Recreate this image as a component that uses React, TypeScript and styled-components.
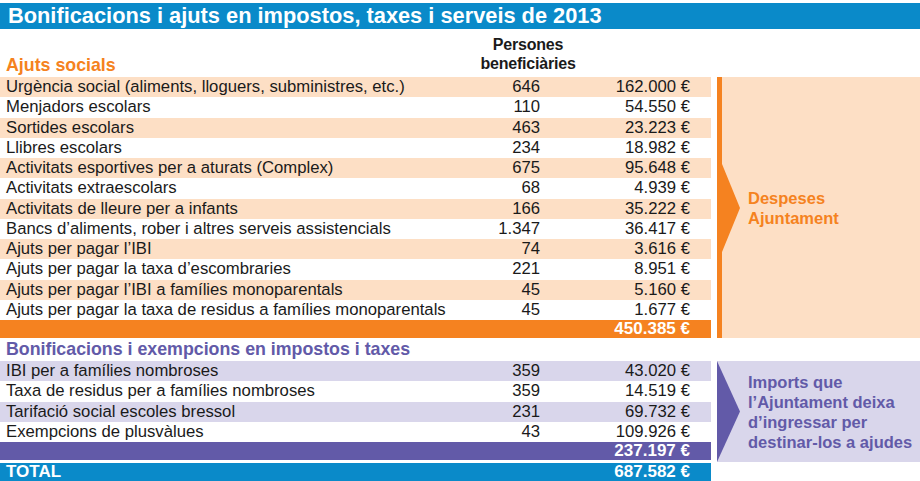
import React from "react";
import styled, { createGlobalStyle } from "styled-components";

const C = {
  blue: "#0a8ac9",
  orange: "#f58220",
  peach: "#fddfc5",
  purple: "#625aa8",
  lavender: "#d9d6eb",
  text: "#1a1a1a",
};

const Global = createGlobalStyle`
  html, body { margin: 0; padding: 0; background: #fff; }
  body { font-family: "Liberation Sans", Arial, Helvetica, sans-serif; color: ${C.text}; }
`;

const Page = styled.div`
  width: 920px;
  height: 481px;
  padding-top: 3px;
  box-sizing: border-box;
  overflow: hidden;
`;

const TitleBar = styled.div`
  height: 26px;
  background: ${C.blue};
  color: #fff;
  font-weight: 700;
  font-size: 21.8px;
  line-height: 26px;
  padding-left: 8px;
  white-space: nowrap;
`;

const HeadArea = styled.div`
  width: 711px;
  height: 48px;
  display: grid;
  grid-template-columns: 460px 136px;
  align-items: end;
`;

const HeadAreaSmall = styled.div`
  height: 23px;
  display: flex;
  align-items: end;
`;

const SectionTitle = styled.div<{ $color: string }>`
  color: ${(p) => p.$color};
  font-weight: 700;
  font-size: 17.8px;
  line-height: 20px;
  padding-left: 6px;
  padding-bottom: 2px;
  white-space: nowrap;
`;

const ColHead = styled.div`
  font-weight: 700;
  font-size: 16px;
  line-height: 19px;
  text-align: center;
  padding-bottom: 4px;
  letter-spacing: -0.2px;
`;

const Section = styled.div`
  display: flex;
  gap: 6px;
`;

const Table = styled.div<{ $after?: number }>`
  width: 711px;
  flex: none;
  margin-bottom: ${(p) => p.$after ?? 0}px;
`;

const Row = styled.div<{ $bg: string }>`
  display: grid;
  grid-template-columns: 454px 80px 150px;
  height: 20.25px;
  align-items: center;
  background: ${(p) => p.$bg};
  padding-left: 6px;
  padding-right: 21px;
  font-size: 16.7px;
  line-height: 20px;
  white-space: nowrap;
`;

const Num = styled.span`
  text-align: right;
`;

const TotalRow = styled.div<{ $bg: string }>`
  display: flex;
  justify-content: space-between;
  height: 18px;
  background: ${(p) => p.$bg};
  color: #fff;
  font-weight: 700;
  font-size: 17px;
  line-height: 18px;
  padding-left: 6px;
  padding-right: 21px;
`;

const Panel = styled.div<{ $bg: string; $line?: string }>`
  flex: 1;
  display: flex;
  align-items: center;
  background: ${(p) => p.$bg};
  border-left: ${(p) => (p.$line ? `5px solid ${p.$line}` : "none")};
`;

const ArrowBox = styled.svg`
  flex: none;
  align-self: center;
`;

const PanelText = styled.div<{ $color: string }>`
  color: ${(p) => p.$color};
  font-weight: 700;
  font-size: 16.5px;
  line-height: 20px;
  padding-left: 8px;
  white-space: nowrap;
`;

const GrandTotal = styled.div`
  width: 711px;
  margin-top: 1px;
`;

const ajuts: [string, string, string][] = [
  ["Urgència social (aliments, lloguers, subministres, etc.)", "646", "162.000 €"],
  ["Menjadors escolars", "110", "54.550 €"],
  ["Sortides escolars", "463", "23.223 €"],
  ["Llibres escolars", "234", "18.982 €"],
  ["Activitats esportives per a aturats (Complex)", "675", "95.648 €"],
  ["Activitats extraescolars", "68", "4.939 €"],
  ["Activitats de lleure per a infants", "166", "35.222 €"],
  ["Bancs d’aliments, rober i altres serveis assistencials", "1.347", "36.417 €"],
  ["Ajuts per pagar l’IBI", "74", "3.616 €"],
  ["Ajuts per pagar la taxa d’escombraries", "221", "8.951 €"],
  ["Ajuts per pagar l’IBI a famílies monoparentals", "45", "5.160 €"],
  ["Ajuts per pagar la taxa de residus a famílies monoparentals", "45", "1.677 €"],
];

const bonif: [string, string, string][] = [
  ["IBI per a famílies nombroses", "359", "43.020 €"],
  ["Taxa de residus per a famílies nombroses", "359", "14.519 €"],
  ["Tarifació social escoles bressol", "231", "69.732 €"],
  ["Exempcions de plusvàlues", "43", "109.926 €"],
];

export default function App() {
  return (
    <Page>
      <Global />
      <TitleBar>Bonificacions i ajuts en impostos, taxes i serveis de 2013</TitleBar>
      <HeadArea>
        <SectionTitle $color={C.orange}>Ajuts socials</SectionTitle>
        <ColHead>
          Persones
          <br />
          beneficiàries
        </ColHead>
      </HeadArea>
      <Section>
        <Table>
          {ajuts.map((r, i) => (
            <Row key={r[0]} $bg={i % 2 === 0 ? C.peach : "#fff"}>
              <span>{r[0]}</span>
              <Num>{r[1]}</Num>
              <Num>{r[2]}</Num>
            </Row>
          ))}
          <TotalRow $bg={C.orange}>
            <span />
            <span>450.385 €</span>
          </TotalRow>
        </Table>
        <Panel $bg={C.peach} $line={C.orange}>
          <ArrowBox width="18" height="88" viewBox="0 0 18 88">
            <polygon points="0,0 18,44 0,88" fill={C.orange} />
          </ArrowBox>
          <PanelText $color={C.orange}>
            Despeses
            <br />
            Ajuntament
          </PanelText>
        </Panel>
      </Section>
      <HeadAreaSmall>
        <SectionTitle $color={C.purple}>Bonificacions i exempcions en impostos i taxes</SectionTitle>
      </HeadAreaSmall>
      <Section>
        <Table $after={2}>
          {bonif.map((r, i) => (
            <Row key={r[0]} $bg={i % 2 === 0 ? C.lavender : "#fff"}>
              <span>{r[0]}</span>
              <Num>{r[1]}</Num>
              <Num>{r[2]}</Num>
            </Row>
          ))}
          <TotalRow $bg={C.purple}>
            <span />
            <span>237.197 €</span>
          </TotalRow>
        </Table>
        <Panel $bg={C.lavender}>
          <ArrowBox width="23" height="101" viewBox="0 0 23 101">
            <polygon points="0,0 23,50.5 0,101" fill={C.purple} />
          </ArrowBox>
          <PanelText $color={C.purple}>
            Imports que
            <br />
            l’Ajuntament deixa
            <br />
            d’ingressar per
            <br />
            destinar-los a ajudes
          </PanelText>
        </Panel>
      </Section>
      <GrandTotal>
        <TotalRow $bg={C.blue}>
          <span>TOTAL</span>
          <span>687.582 €</span>
        </TotalRow>
      </GrandTotal>
    </Page>
  );
}
